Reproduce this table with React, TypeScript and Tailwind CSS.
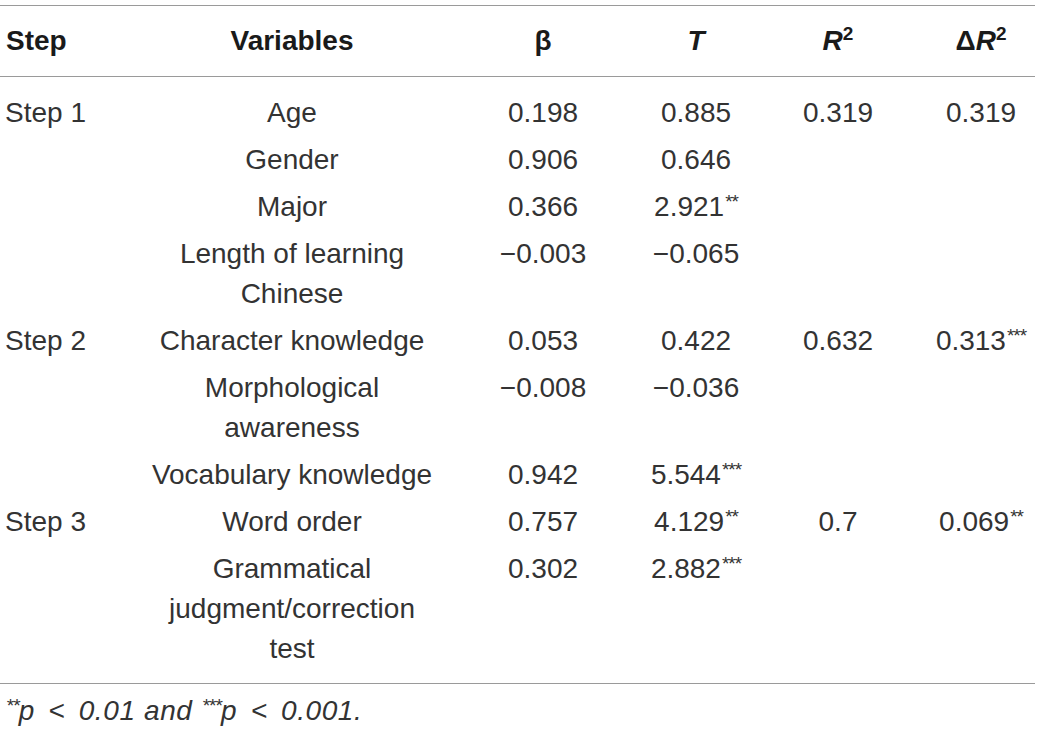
import React from "react";

const cols = "grid grid-cols-[150px_284px_218px_88px_196px_90px]";

function Stars({ n }: { n: number }) {
  return (
    <span className="relative top-[-8px] text-[19px] leading-none ml-[1px] tracking-[-1px]">{"*".repeat(n)}</span>
  );
}

function Sup2() {
  return <span className="relative top-[-10px] text-[19px] leading-none not-italic">2</span>;
}

function Lt() {
  return <span className="px-[5px]">&lt;</span>;
}

type Row = {
  step?: string;
  v: React.ReactNode;
  b: string;
  t: React.ReactNode;
  r?: string;
  d?: React.ReactNode;
};

const rows: Row[] = [
  { step: "Step 1", v: "Age", b: "0.198", t: "0.885", r: "0.319", d: "0.319" },
  { v: "Gender", b: "0.906", t: "0.646" },
  { v: "Major", b: "0.366", t: <>2.921<Stars n={2} /></> },
  { v: <>Length of learning<br />Chinese</>, b: "−0.003", t: "−0.065" },
  { step: "Step 2", v: "Character knowledge", b: "0.053", t: "0.422", r: "0.632", d: <>0.313<Stars n={3} /></> },
  { v: <>Morphological<br />awareness</>, b: "−0.008", t: "−0.036" },
  { v: "Vocabulary knowledge", b: "0.942", t: <>5.544<Stars n={3} /></> },
  { step: "Step 3", v: "Word order", b: "0.757", t: <>4.129<Stars n={2} /></>, r: "0.7", d: <>0.069<Stars n={2} /></> },
  { v: <>Grammatical<br />judgment/correction<br />test</>, b: "0.302", t: <>2.882<Stars n={3} /></> },
];

export default function App() {
  return (
    <div
      className="w-[1039px] h-[733px] bg-white text-[28px] text-[#333333] overflow-hidden"
      style={{ fontFamily: '"Liberation Sans", Arial, sans-serif' }}
    >
      <div className="w-[1035px] pt-[5px]">
        <div className={`${cols} h-[72px] items-center border-t border-b border-[#9a9a9a] font-bold text-[#1a1a1a] leading-[40px]`}>
          <div className="pl-[6px]">Step</div>
          <div className="flex justify-center">Variables</div>
          <div className="flex justify-center">β</div>
          <div className="flex justify-center italic">T</div>
          <div className="flex justify-center">
            <span>
              <span className="italic">R</span>
              <Sup2 />
            </span>
          </div>
          <div className="flex justify-center">
            <span>
              <span>Δ</span>
              <span className="italic">R</span>
              <Sup2 />
            </span>
          </div>
        </div>
        <div className="pt-[12px] pb-[11px] border-b border-[#9a9a9a]">
          {rows.map((row, i) => (
            <div key={i} className={`${cols} py-[3.5px] leading-[40px] items-start`}>
              <div className="pl-[5px] whitespace-nowrap">{row.step ?? ""}</div>
              <div className="flex justify-center text-center whitespace-nowrap">
                <div>{row.v}</div>
              </div>
              <div className="flex justify-center whitespace-nowrap">{row.b}</div>
              <div className="flex justify-center whitespace-nowrap">
                <span>{row.t}</span>
              </div>
              <div className="flex justify-center whitespace-nowrap">{row.r ?? ""}</div>
              <div className="flex justify-center whitespace-nowrap">
                <span>{row.d ?? ""}</span>
              </div>
            </div>
          ))}
        </div>
        <div className="mt-[7px] leading-[40px] italic pl-[5px] whitespace-nowrap tracking-[0.6px]">
          <Stars n={2} />p <Lt /> 0.01 and <Stars n={3} />p <Lt /> 0.001.
        </div>
      </div>
    </div>
  );
}
